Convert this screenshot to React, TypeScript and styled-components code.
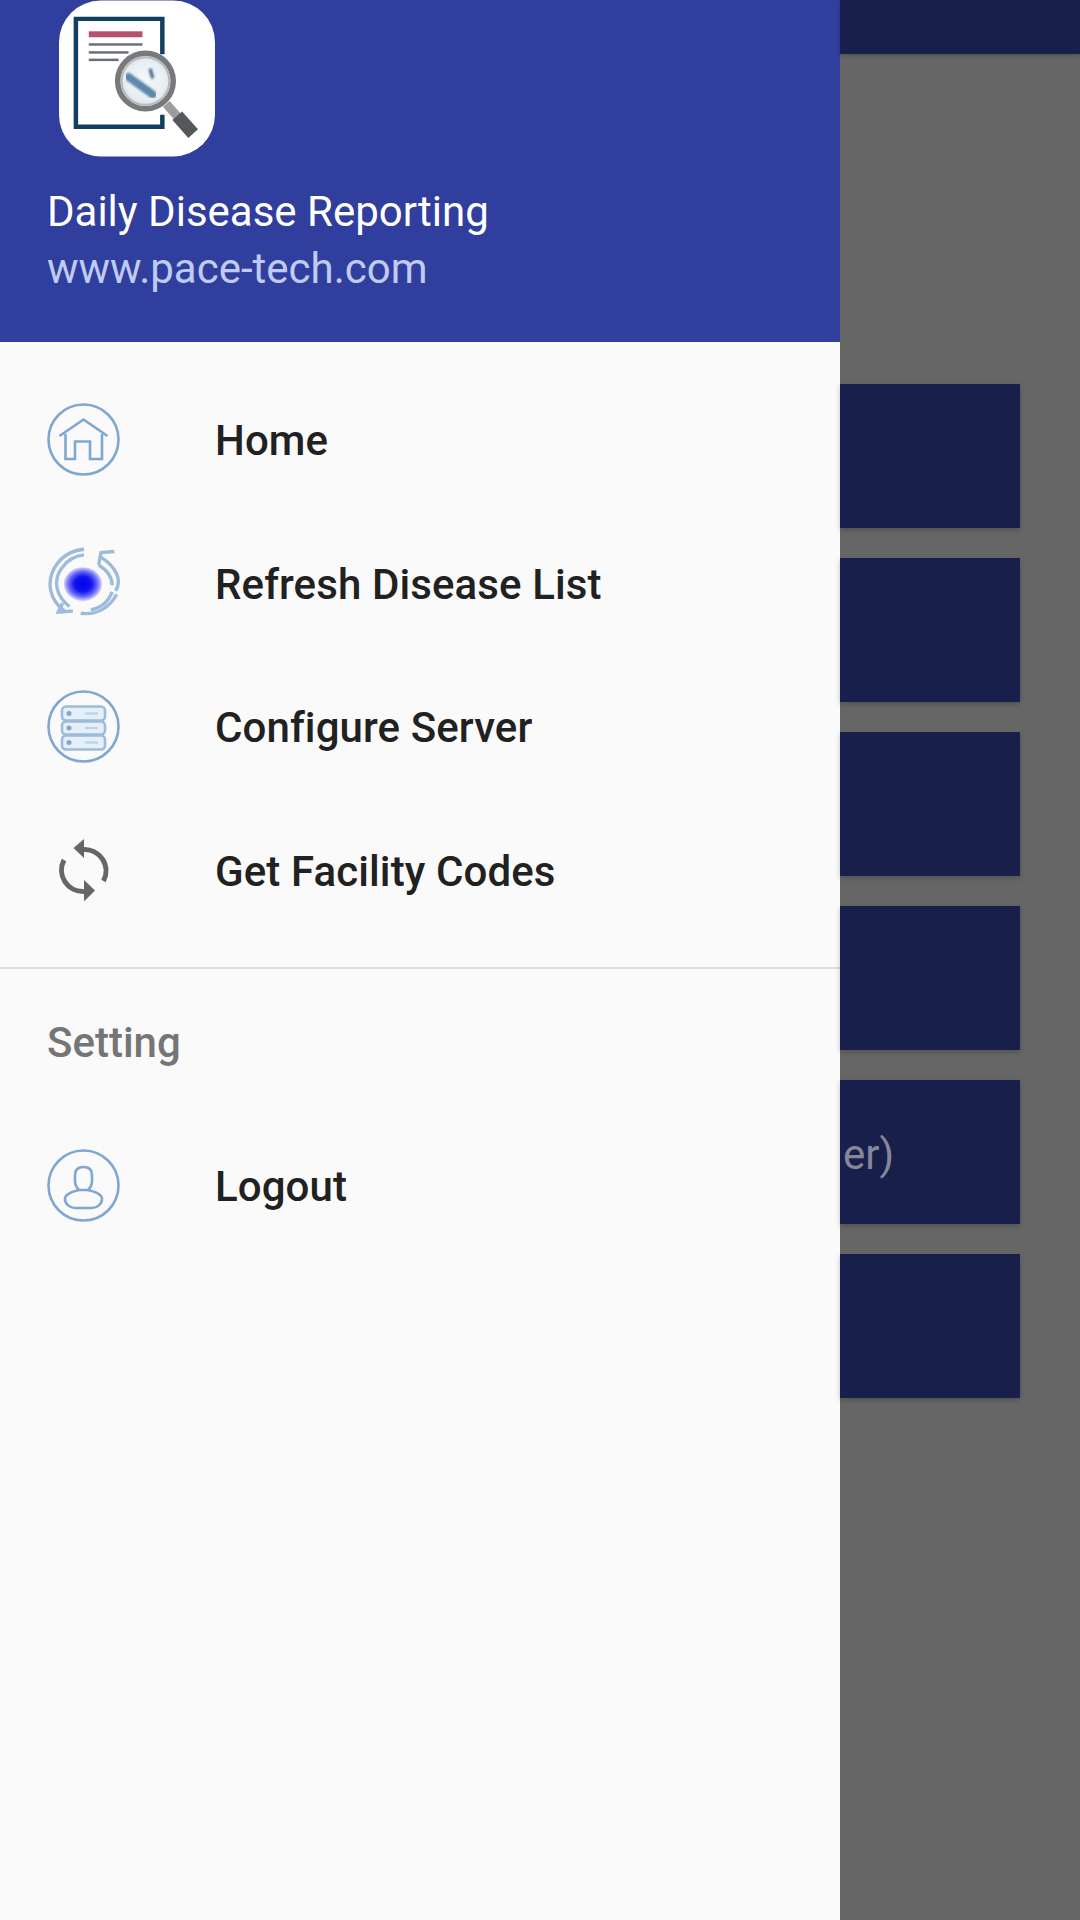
import React from 'react';
import styled, { createGlobalStyle } from 'styled-components';

const GlobalStyle = createGlobalStyle`
  html, body {
    margin: 0;
    padding: 0;
    background: #666666;
  }
  body {
    font-family: Roboto, "Noto Sans", sans-serif;
  }
`;

const Screen = styled.div`
  width: 1080px;
  height: 1920px;
  display: flex;
  overflow: hidden;
`;

const Drawer = styled.aside`
  width: 840px;
  height: 100%;
  flex-shrink: 0;
  background: #fafafa;
  display: flex;
  flex-direction: column;
`;

const DrawerHeader = styled.header`
  height: 342px;
  box-sizing: border-box;
  background: #303e9e;
  padding-left: 47px;
  display: flex;
  flex-direction: column;
`;

const AppLogo = styled.svg`
  width: 156px;
  height: 157px;
  margin-left: 12px;
  display: block;
`;

const AppTitle = styled.div`
  margin-top: 31px;
  font-size: 42px;
  line-height: 48px;
  color: #ffffff;
`;

const AppSite = styled.div`
  margin-top: 9px;
  font-size: 42px;
  line-height: 48px;
  color: #c0cbf2;
`;

const MenuSection = styled.nav`
  padding-top: 26px;
  padding-bottom: 25px;
  border-bottom: 2px solid #dfdfdf;
`;

const MenuRow = styled.div`
  height: 143.5px;
  display: flex;
  align-items: center;
  padding-left: 47px;
`;

const MenuIcon = styled.svg`
  width: 73px;
  height: 73px;
  flex-shrink: 0;
  display: block;
`;

const MenuLabel = styled.span`
  margin-left: 95px;
  padding-top: 2px;
  font-size: 42px;
  font-weight: 500;
  letter-spacing: 0.1px;
  color: #212121;
`;

const SectionTitle = styled.div`
  padding: 50px 0 0 47px;
  height: 145px;
  line-height: 48px;
  box-sizing: border-box;
  font-size: 42px;
  font-weight: 500;
  color: #757575;
`;

const Backdrop = styled.main`
  flex: 1;
  height: 100%;
  background: #666666;
  display: flex;
  flex-direction: column;
`;

const TopBar = styled.div`
  height: 54px;
  background: #181f4b;
  margin-bottom: 330px;
  box-shadow: 0 2px 4px rgba(0, 0, 0, 0.2);
`;

const CardList = styled.div`
  display: flex;
  flex-direction: column;
  gap: 30.5px;
  margin-right: 60px;
`;

const Card = styled.div`
  height: 143.5px;
  background: #181f4b;
  display: flex;
  align-items: center;
  overflow: hidden;
  box-shadow: 0 2px 5px rgba(0, 0, 0, 0.22);
`;

const CardText = styled.span`
  font-size: 42px;
  color: #85889a;
  padding-left: 3px;
  padding-top: 6px;
`;

const iconStroke = '#7fa7d1';

const Logo = () => (
  <AppLogo viewBox="0 0 157 157">
    <defs>
      <radialGradient id="lens" cx="50%" cy="50%" r="50%">
        <stop offset="0%" stopColor="#f4f8fb" />
        <stop offset="70%" stopColor="#e8eef2" />
        <stop offset="100%" stopColor="#d5dadd" />
      </radialGradient>
      <filter id="smudge">
        <feGaussianBlur stdDeviation="1.2" />
      </filter>
    </defs>
    <rect x="0" y="0" width="157" height="157" rx="42" fill="#ffffff" />
    <path d="M104 54V18.500H17V127H104V115" fill="none" stroke="#123f5f" strokeWidth="4.500" />
    <rect x="30" y="31" width="54" height="6" fill="#b8506f" />
    <rect x="30" y="43" width="54" height="2.500" fill="#6b7078" />
    <rect x="30" y="51" width="40" height="2.500" fill="#6b7078" />
    <rect x="30" y="58.500" width="30" height="2.500" fill="#6b7078" />
    <path d="M108 104L122 120" stroke="#9a9c9d" strokeWidth="9" />
    <path d="M119 116L135 134" stroke="#55585a" strokeWidth="13" />
    <circle cx="87" cy="81" r="28" fill="url(#lens)" stroke="#77797b" strokeWidth="5.500" />
    <circle cx="87" cy="81" r="24" fill="none" stroke="#b7babc" strokeWidth="2" />
    <g filter="url(#smudge)">
      <path d="M70 77L95 95" stroke="#5c86ab" strokeWidth="8" strokeLinecap="round" strokeDasharray="3 1.500" />
      <path d="M92 70L94 77" stroke="#4f6f8e" strokeWidth="3.500" strokeLinecap="round" />
    </g>
  </AppLogo>
);

const HomeIcon = () => (
  <MenuIcon viewBox="0 0 73 73" fill="none" stroke={iconStroke} strokeWidth="2.600">
    <circle cx="36.500" cy="36.500" r="35" />
    <path d="M12.500 33L36.500 16.500L60.500 33" />
    <path d="M18.500 31V56H28V38.500H43V56H55V31" />
  </MenuIcon>
);

const RefreshIcon = () => (
  <MenuIcon viewBox="4 4 65 65" fill="none" stroke="#9dbcda" strokeWidth="3">
    <defs>
      <radialGradient id="pulse" cx="50%" cy="50%" r="50%">
        <stop offset="0%" stopColor="#0000e8" />
        <stop offset="45%" stopColor="#1414ee" />
        <stop offset="75%" stopColor="#6a6af6" />
        <stop offset="100%" stopColor="#d4d4fb" />
      </radialGradient>
    </defs>
    <path d="M21 62C6 52 2 34 13 19C18 12 26 7 37 6" />
    <path d="M24 57C12 48 9 34 17 23C21 17 28 12 37 11" />
    <path d="M34 63C48 65 60 58 66 46" />
    <path d="M43 60C53 58 59 52 62 44" />
    <path d="M52 13C66 22 71 34 65 43" />
    <path d="M50 20C58 25 62 32 62 38" />
    <path d="M50 20L52 9L64 8" />
    <path d="M27 61L14 62L18 54" />
    <ellipse cx="36" cy="37" rx="17" ry="15" fill="url(#pulse)" stroke="none" />
  </MenuIcon>
);

const ServerIcon = () => (
  <MenuIcon viewBox="0 0 73 73" fill="none" stroke={iconStroke} strokeWidth="2.600">
    <circle cx="36.500" cy="36.500" r="35" />
    <g stroke="#9dbcda" fill="#e6eff8">
      <rect x="15" y="16.500" width="43" height="14" rx="4" />
      <rect x="15" y="31.500" width="43" height="13" rx="4" />
      <rect x="15" y="45.500" width="43" height="14" rx="4" />
    </g>
    <g fill="#7fa7d1" stroke="none">
      <circle cx="22" cy="23.500" r="2.500" />
      <circle cx="22" cy="38" r="2.500" />
      <circle cx="22" cy="52.500" r="2.500" />
    </g>
    <g stroke="#bcd3ea" strokeWidth="2.400">
      <path d="M38 23.500H51" />
      <path d="M38 38H51" />
      <path d="M38 52.500H51" />
    </g>
  </MenuIcon>
);

const SyncIcon = () => (
  <MenuIcon viewBox="0 0 73 73" fill="none" stroke="#666666" strokeWidth="5">
    <path d="M36 15.500A21.500 21.500 0 0 1 56.500 47" />
    <path d="M37 57.500A21.500 21.500 0 0 1 17 26" />
    <path d="M26.500 14L37 5V24Z" fill="#666666" stroke="none" />
    <path d="M48 56.500L37 46V67.500Z" fill="#666666" stroke="none" />
  </MenuIcon>
);

const UserIcon = () => (
  <MenuIcon viewBox="0 0 73 73" fill="none" stroke={iconStroke} strokeWidth="2.600">
    <circle cx="36.500" cy="36.500" r="35" />
    <path d="M28 26C28 21 31 18 36.500 18C42 18 45 21 45 26V32C45 36 43 39 41 41H32C30 39 28 36 28 32Z" />
    <path d="M32 41C23 43 18 46 18 50C18 55 23 59 28 59H45C50 59 55 55 55 50C55 46 50 43 41 41" />
  </MenuIcon>
);

const primaryItems = [
  { label: 'Home', icon: <HomeIcon /> },
  { label: 'Refresh Disease List', icon: <RefreshIcon /> },
  { label: 'Configure Server', icon: <ServerIcon /> },
  { label: 'Get Facility Codes', icon: <SyncIcon /> },
];

const cards = ['', '', '', '', 'er)', ''];

const App = () => {
  return (
    <>
      <GlobalStyle />
      <Screen>
        <Drawer>
          <DrawerHeader>
            <Logo />
            <AppTitle>Daily Disease Reporting</AppTitle>
            <AppSite>www.pace-tech.com</AppSite>
          </DrawerHeader>
          <MenuSection>
            {primaryItems.map((item) => (
              <MenuRow key={item.label}>
                {item.icon}
                <MenuLabel>{item.label}</MenuLabel>
              </MenuRow>
            ))}
          </MenuSection>
          <SectionTitle>Setting</SectionTitle>
          <MenuRow>
            <UserIcon />
            <MenuLabel>Logout</MenuLabel>
          </MenuRow>
        </Drawer>
        <Backdrop>
          <TopBar />
          <CardList>
            {cards.map((text, i) => (
              <Card key={i}>{text && <CardText>{text}</CardText>}</Card>
            ))}
          </CardList>
        </Backdrop>
      </Screen>
    </>
  );
};

export default App;
